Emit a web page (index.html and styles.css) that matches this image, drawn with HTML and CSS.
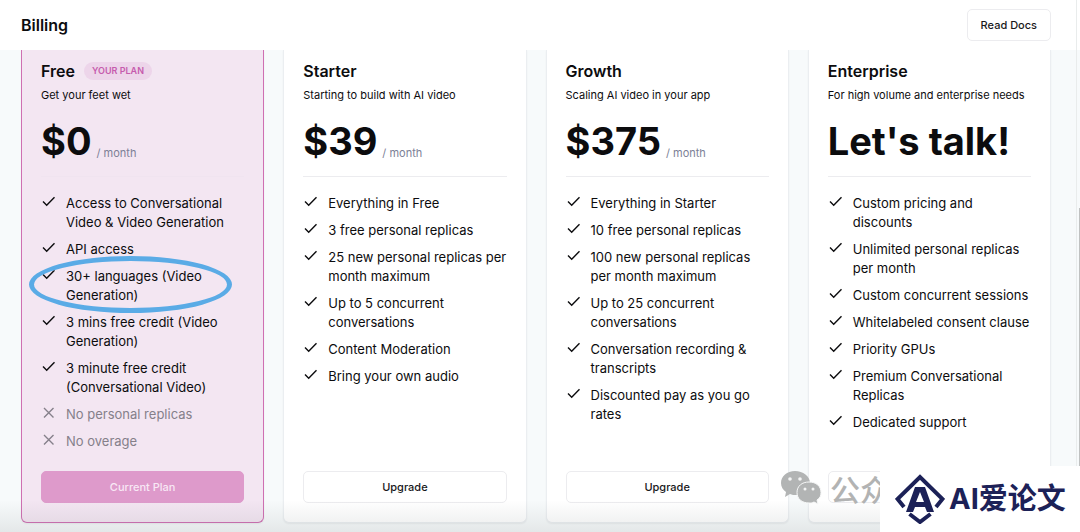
FILE: index.html
```html
<!DOCTYPE html>
<html lang="en">
<head>
  <meta charset="UTF-8" />
  <meta name="viewport" content="width=device-width, initial-scale=1.0"/>
  <title>Billing</title>
  <link rel="stylesheet" href="styles.css">
</head>
<body>
  <svg class="sprite" aria-hidden="true">
    <symbol id="check" viewBox="0 0 16 16"><path d="M2 7.500 5.700 11.200 13.500 3.300"/></symbol>
    <symbol id="cross" viewBox="0 0 16 16"><path d="M3 3l9.500 9.500M12.500 3l-9.500 9.500"/></symbol>
  </svg>

  <header class="topbar">
    <h1>Billing</h1>
    <a class="btn docs" href="#docs">Read Docs</a>
  </header>

  <main class="plans">
    <section class="plan current">
      <h2>Free <span class="badge">YOUR PLAN</span></h2>
      <p class="tagline">Get your feet wet</p>
      <p class="price"><b>$0</b> <small>/ month</small></p>
      <ul>
        <li><svg><use href="#check"/></svg><span>Access to Conversational Video &amp; Video Generation</span></li>
        <li><svg><use href="#check"/></svg><span>API access</span></li>
        <li class="circled"><svg><use href="#check"/></svg><span>30+ languages (Video Generation)</span></li>
        <li><svg><use href="#check"/></svg><span>3 mins free credit (Video Generation)</span></li>
        <li><svg><use href="#check"/></svg><span>3 minute free credit (Conversational Video)</span></li>
        <li class="off"><svg><use href="#cross"/></svg><span>No personal replicas</span></li>
        <li class="off"><svg><use href="#cross"/></svg><span>No overage</span></li>
      </ul>
      <button class="btn" type="button" disabled>Current Plan</button>
    </section>

    <section class="plan">
      <h2>Starter</h2>
      <p class="tagline">Starting to build with AI video</p>
      <p class="price"><b>$39</b> <small>/ month</small></p>
      <ul>
        <li><svg><use href="#check"/></svg><span>Everything in Free</span></li>
        <li><svg><use href="#check"/></svg><span>3 free personal replicas</span></li>
        <li><svg><use href="#check"/></svg><span>25 new personal replicas per month maximum</span></li>
        <li><svg><use href="#check"/></svg><span>Up to 5 concurrent conversations</span></li>
        <li><svg><use href="#check"/></svg><span>Content Moderation</span></li>
        <li><svg><use href="#check"/></svg><span>Bring your own audio</span></li>
      </ul>
      <button class="btn" type="button">Upgrade</button>
    </section>

    <section class="plan">
      <h2>Growth</h2>
      <p class="tagline">Scaling AI video in your app</p>
      <p class="price"><b>$375</b> <small>/ month</small></p>
      <ul>
        <li><svg><use href="#check"/></svg><span>Everything in Starter</span></li>
        <li><svg><use href="#check"/></svg><span>10 free personal replicas</span></li>
        <li><svg><use href="#check"/></svg><span>100 new personal replicas per month maximum</span></li>
        <li><svg><use href="#check"/></svg><span>Up to 25 concurrent conversations</span></li>
        <li><svg><use href="#check"/></svg><span>Conversation recording &amp; transcripts</span></li>
        <li><svg><use href="#check"/></svg><span>Discounted pay as you go rates</span></li>
      </ul>
      <button class="btn" type="button">Upgrade</button>
    </section>

    <section class="plan">
      <h2>Enterprise</h2>
      <p class="tagline">For high volume and enterprise needs</p>
      <p class="price"><b>Let's talk!</b></p>
      <ul>
        <li><svg><use href="#check"/></svg><span>Custom pricing and discounts</span></li>
        <li><svg><use href="#check"/></svg><span>Unlimited personal replicas per month</span></li>
        <li><svg><use href="#check"/></svg><span>Custom concurrent sessions</span></li>
        <li><svg><use href="#check"/></svg><span>Whitelabeled consent clause</span></li>
        <li><svg><use href="#check"/></svg><span>Priority GPUs</span></li>
        <li><svg><use href="#check"/></svg><span>Premium Conversational Replicas</span></li>
        <li><svg><use href="#check"/></svg><span>Dedicated support</span></li>
      </ul>
      <button class="btn" type="button" aria-label="Enterprise"></button>
    </section>
  </main>

  <div class="fade"></div>
  <div class="scrollbar"></div>

  <div class="watermark" lang="zh">
    <svg viewBox="0 0 42 36">
      <path d="M15 1C7 1 1 6 1 13c0 4 2 7 5 9l-1 5 5-3c2 1 4 1 6 1 8 0 14-5 14-12S23 1 15 1z"/>
      <path class="front" d="M29 12c-7 0-12 4-12 10.500s5 10.500 12 10.500c2 0 3 0 5-1l4 2-1-4c3-2 4-4 4-7.500C41 16 36 12 29 12z"/>
      <g class="eyes"><circle cx="10" cy="9" r="1.800"/><circle cx="20" cy="9" r="1.800"/><circle cx="25" cy="19" r="1.500"/><circle cx="33" cy="19" r="1.500"/></g>
    </svg>
    <span>公众</span>
  </div>

  <div class="brand" lang="zh">
    <svg viewBox="0 0 50 50">
      <path class="line" d="M9 33 2.500 25 25 3 47.500 25 41 33M14.500 40 25 48 35.500 40"/>
      <path class="mark" fill-rule="evenodd" d="M20 13h10l9 25h-7l-2-5H20l-2 5h-7zM25 18l-4 10h8z"/>
    </svg>
    <span>AI爱论文</span>
  </div>
</body>
</html>
```
FILE: styles.css
```css
*, *::after {
  box-sizing: border-box;
}
body {
  margin: 0;
  min-height: 100vh;
  position: relative;
  overflow: hidden;
  background: #f7fafb;
  color: #0c0c0e;
  font-family: Inter, sans-serif;
}
h1, h2, p, ul {
  margin: 0;
  padding: 0;
}
.sprite {
  display: none;
}
.topbar {
  display: flex;
  align-items: center;
  justify-content: space-between;
  height: 50px;
  padding: 0 29px 0 21px;
  background: #fff;
}
h1 {
  font-size: 16px;
  font-weight: 600;
}
.btn {
  display: flex;
  align-items: center;
  justify-content: center;
  height: 32px;
  border: 1px solid #ececef;
  border-radius: 5px;
  background: #fff;
  color: #18181b;
  font: 500 11px Inter, sans-serif;
  text-decoration: none;
}
.docs {
  padding: 0 13px;
}
.plans {
  display: grid;
  grid-template-columns: repeat(4, 1fr);
  gap: 19px;
  padding: 0 29px 9px 21px;
}
.plan {
  display: flex;
  flex-direction: column;
  padding: 11px 19px 19px;
  border: 1px solid #ebeef1;
  border-top: none;
  border-radius: 0 0 6px 6px;
  background: #fff;
  box-shadow: 0 1px 2px rgba(0, 0, 0, 0.06);
}
.plan.current {
  border-color: #cf6fb2;
  background: #f3e6f2;
}
h2 {
  display: flex;
  align-items: center;
  gap: 9px;
  height: 20px;
  font-size: 16px;
  font-weight: 600;
}
.badge {
  padding: 0 8px;
  border-radius: 9px;
  background: #edd5ea;
  color: #c65bad;
  font-size: 9px;
  line-height: 18px;
}
.tagline {
  margin-top: 5px;
  font-size: 11px;
  line-height: 18px;
}
.price {
  display: flex;
  align-items: flex-end;
  gap: 5px;
  height: 73px;
  padding-bottom: 11px;
  border-bottom: 1px solid #ececef;
  white-space: nowrap;
}
.price b {
  font-size: 38px;
  line-height: 48px;
}
.price small {
  color: #7c7f96;
  font-size: 11px;
  line-height: 23px;
}
.current .price {
  border-color: #f0e4f0;
}
ul {
  display: flex;
  flex-direction: column;
  gap: 8px;
  flex: 1;
  min-height: 275px;
  padding-top: 17px;
  margin: 0 -2px 19px 0;
  list-style: none;
}
li {
  display: flex;
  gap: 9px;
  font-size: 13px;
  line-height: 19px;
}
li svg {
  flex: none;
  width: 16px;
  height: 16px;
  fill: none;
  stroke: currentColor;
  stroke-width: 1.4;
}
.off {
  color: #85808a;
}
.circled {
  position: relative;
}
/* ring round the feature */
.circled::after {
  content: "";
  position: absolute;
  left: -12px;
  top: -11px;
  width: 203px;
  height: 57px;
  border: 5px solid #5aabe6;
  border-radius: 50%;
}
.current .btn {
  border-color: #de9acb;
  background: #de9acb;
  color: #f8e8f5;
}
.fade {
  position: absolute;
  left: 0;
  right: 0;
  bottom: 0;
  height: 32px;
  background: linear-gradient(rgba(90, 100, 100, 0), rgba(90, 100, 100, 0.12));
  pointer-events: none;
}
.scrollbar {
  position: absolute;
  top: 0;
  right: 0;
  bottom: 0;
  width: 4px;
  border-left: 1px solid #e9ecec;
}
.scrollbar::after {
  content: "";
  position: absolute;
  top: 208px;
  right: 0;
  bottom: 0;
  width: 1px;
  background: #bfc1c1;
}
.watermark {
  position: absolute;
  right: 190px;
  bottom: 22px;
  display: flex;
  align-items: center;
  gap: 8px;
  color: #b2b3b3;
  font: 500 30px/44px "Noto Sans CJK SC", sans-serif;
}
.watermark svg {
  width: 42px;
  height: 36px;
  fill: #b2b4b4;
}
.watermark .front {
  stroke: #f7f8f8;
}
.watermark .eyes {
  fill: #f4f5f5;
}
.brand {
  position: absolute;
  right: 0;
  bottom: 0;
  display: flex;
  align-items: center;
  gap: 4px;
  width: 200px;
  height: 66px;
  padding-left: 15px;
  background: #fff;
  color: #1c2157;
  font: 700 29px/58px Inter, "Noto Sans CJK SC", sans-serif;
  white-space: nowrap;
}
.brand svg {
  width: 50px;
  height: 50px;
}
.brand .line {
  fill: none;
  stroke: #1c2157;
  stroke-width: 4;
}
.brand .mark {
  fill: #1c2157;
}
```
